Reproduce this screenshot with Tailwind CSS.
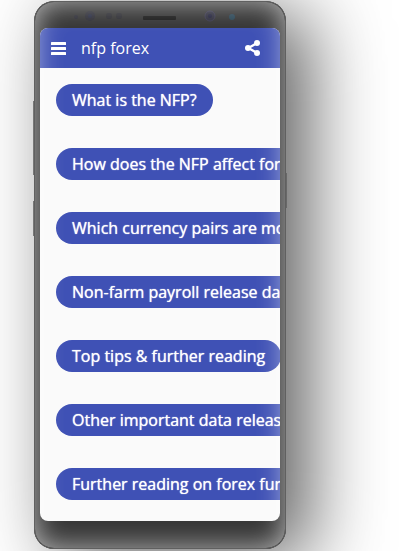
<!DOCTYPE html>
<html lang="en">
<head>
  <meta charset="UTF-8" />
  <meta name="viewport" content="width=device-width, initial-scale=1.0" />
  <title>nfp forex</title>
  <script src="https://cdn.jsdelivr.net/npm/@tailwindcss/browser@4"></script>
</head>
<body class="min-h-screen bg-white font-['Open_Sans',sans-serif] overflow-hidden">
  <div class="pl-[34px] pr-[119px] pt-px">
    <!-- Phone -->
    <div class="relative rounded-[20px] bg-[#363636] px-[6px] shadow-[24px_12px_75px_rgba(0,0,0,0.62)]">
      <!-- Side buttons -->
      <span class="absolute -left-px top-[100px] h-[74px] w-px bg-[#777]"></span>
      <span class="absolute -left-px top-[200px] h-[35px] w-px bg-[#777]"></span>
      <span class="absolute -right-px top-[172px] h-[35px] w-px bg-[#686868]"></span>

      <!-- Speaker, camera and sensors -->
      <svg class="block h-[27px] w-full" viewBox="0 0 240 27" aria-hidden="true">
        <circle cx="36" cy="16" r="2" fill="#303039" />
        <circle cx="50" cy="15" r="5" fill="#303039" />
        <circle cx="50" cy="15" r="2" fill="#2c3045" />
        <circle cx="69" cy="15" r="3" fill="#2f2f35" />
        <circle cx="79" cy="15" r="3" fill="#2f2f35" />
        <rect x="103" y="15" width="33" height="4" rx="1" fill="#1c1c1c" />
        <circle cx="170" cy="15" r="5" fill="#30303f" stroke="#3e3c52" />
        <circle cx="170" cy="15" r="2" fill="#25253f" />
        <circle cx="192" cy="16" r="3" fill="#2c4757" />
      </svg>

      <div class="overflow-hidden rounded-lg bg-[#fafafa]">
        <header class="flex h-10 items-center bg-[#3f51b5] pl-[11px] pr-5 text-white">
          <button aria-label="Menu">
            <svg class="block h-4 w-4" viewBox="0 0 16 16" fill="currentColor">
              <rect y="2" width="15" height="3" rx="0.5" />
              <rect y="7" width="15" height="3" rx="0.5" />
              <rect y="12" width="15" height="3" rx="0.5" />
            </svg>
          </button>
          <h1 class="ml-[14px] flex-1 text-base">nfp forex</h1>
          <button aria-label="Share">
            <svg class="block h-4 w-[15px]" viewBox="0 0 15 16" fill="currentColor">
              <path d="M12 3 3.500 8l8.500 5" fill="none" stroke="currentColor" stroke-width="2.300" />
              <circle cx="12" cy="3" r="3" />
              <circle cx="3" cy="8" r="3" />
              <circle cx="12" cy="13" r="3" />
            </svg>
          </button>
        </header>

        <nav class="flex flex-col items-start gap-8 px-4 pt-4 pb-[21px] text-base font-medium text-white [text-shadow:0_0_1px_#fff]">
          <a href="#" class="h-8 rounded-full bg-[#3f51b5] px-4 leading-8 whitespace-nowrap">What is the NFP?</a>
          <a href="#" class="h-8 rounded-full bg-[#3f51b5] px-4 leading-8 whitespace-nowrap">How does the NFP affect forex?</a>
          <a href="#" class="h-8 rounded-full bg-[#3f51b5] px-4 leading-8 whitespace-nowrap">Which currency pairs are most affected?</a>
          <a href="#" class="h-8 rounded-full bg-[#3f51b5] px-4 leading-8 whitespace-nowrap">Non-farm payroll release dates</a>
          <a href="#" class="h-8 rounded-full bg-[#3f51b5] px-4 leading-8 whitespace-nowrap">Top tips &amp; further reading</a>
          <a href="#" class="h-8 rounded-full bg-[#3f51b5] px-4 leading-8 whitespace-nowrap">Other important data releases</a>
          <a href="#" class="h-8 rounded-full bg-[#3f51b5] px-4 leading-8 whitespace-nowrap">Further reading on forex fundamentals</a>
        </nav>
      </div>
      <div class="h-7"></div>

      <!-- Glossy edge -->
      <div class="pointer-events-none absolute inset-0 rounded-[20px] border border-[#606060] shadow-[inset_0_0_28px_rgba(255,255,255,0.65)]"></div>
    </div>
  </div>
</body>
</html>
